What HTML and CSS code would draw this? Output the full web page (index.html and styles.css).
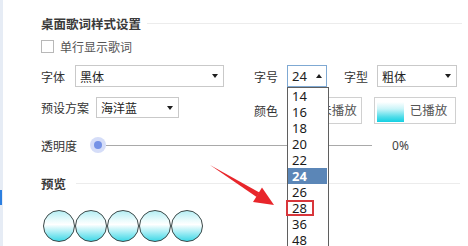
FILE: index.html
```html
<!DOCTYPE html>
<html lang="zh-CN">
<head>
    <meta charset="UTF-8">
    <title>桌面歌词样式设置</title>
    <link rel="stylesheet" href="styles.css">
</head>
<body>
    <div class="window">
        <div class="side"><span class="side-mark"></span></div>

        <div class="panel">
            <div class="section-title">
                <span>桌面歌词样式设置</span>
                <i class="rule"></i>
            </div>

            <label class="check-row">
                <span class="checkbox"></span>
                <span>单行显示歌词</span>
            </label>

            <div class="row row-font">
                <div class="group-left">
                    <span class="lbl">字体</span>
                    <div class="select sel-font"><span>黑体</span><b class="caret"></b></div>
                </div>
                <div class="group-right">
                    <span class="lbl">字号</span>
                    <div class="select sel-size is-open">
                        <span>24</span><b class="caret caret-up"></b>
                        <ul class="size-list">
                            <li>14</li>
                            <li>16</li>
                            <li>18</li>
                            <li>20</li>
                            <li>22</li>
                            <li class="is-active">24</li>
                            <li>26</li>
                            <li>28</li>
                            <li>36</li>
                            <li>48</li>
                            <span class="mark-box"></span>
                        </ul>
                    </div>
                    <span class="lbl lbl-style">字型</span>
                    <div class="select sel-style"><span>粗体</span><b class="caret"></b></div>
                </div>
            </div>

            <div class="row row-scheme">
                <div class="group-left">
                    <span class="lbl">预设方案</span>
                    <div class="select sel-scheme"><span>海洋蓝</span><b class="caret"></b></div>
                </div>
                <div class="group-right">
                    <span class="lbl">颜色</span>
                    <div class="color-btn btn-idle"><span class="swatch swatch-idle"></span><span class="btn-text">未播放</span></div>
                    <div class="color-btn btn-played"><span class="swatch swatch-played"></span><span class="btn-text">已播放</span></div>
                </div>
            </div>

            <div class="row row-opacity">
                <span class="lbl">透明度</span>
                <div class="slider">
                    <span class="knob"></span>
                    <span class="track"></span>
                </div>
                <span class="percent">0%</span>
            </div>

            <div class="section-title preview-title">
                <span>预览</span>
                <i class="rule"></i>
            </div>

            <div class="preview">
                <span class="ball"></span>
                <span class="ball"></span>
                <span class="ball"></span>
                <span class="ball"></span>
                <span class="ball"></span>
            </div>
        </div>

        <svg class="annot-arrow" width="468" height="246" viewBox="0 0 468 246">
            <polygon points="210,165 256.6,197 259.4,192.4" fill="#e8262b"/>
            <polygon points="253,202 262,187.5 274,205" fill="#e8262b"/>
        </svg>
    </div>
</body>
</html>
```

FILE: styles.css
```css
/* 桌面歌词设置面板 */
body {
    margin: 0;
    background: #fff;
    font-family: "Noto Sans CJK SC", "Microsoft YaHei", sans-serif;
    font-size: 12px;
    color: #333;
}

.window {
    position: relative;
    width: 468px;
    height: 246px;
    display: flex;
    overflow: hidden;
}

.side {
    width: 3px;
    background: #e6ecf5;
    display: flex;
    flex-direction: column;
    padding-top: 190px;
}

.side-mark {
    width: 2px;
    height: 15px;
    background: #2c7fe0;
}

.panel {
    flex: 1;
    padding: 15px 0 0 38px;
}

.section-title {
    display: flex;
    align-items: center;
    height: 16px;
    font-size: 12.5px;
    font-weight: bold;
    color: #3a3a3a;
}

.section-title .rule {
    flex: 1;
    height: 1px;
    background: #ececec;
    margin: 0 6px 0 6px;
}

.check-row {
    display: flex;
    align-items: center;
    gap: 6px;
    margin-top: 9px;
    height: 13px;
    color: #555;
}

.checkbox {
    width: 11px;
    height: 11px;
    border: 1px solid #b8b8b8;
    background: #fff;
}

.row {
    display: flex;
    align-items: center;
}

.row-font {
    margin-top: 12px;
    height: 22px;
}

.row-scheme {
    margin-top: 10px;
    height: 27px;
    align-items: flex-start;
}

.group-left {
    width: 213px;
    display: flex;
    align-items: center;
}

.group-right {
    display: flex;
    align-items: center;
}

.row-scheme .group-left {
    height: 21px;
}

.row-scheme .group-right {
    height: 27px;
}

.lbl {
    white-space: nowrap;
}

.select {
    position: relative;
    box-sizing: border-box;
    height: 22px;
    border: 1px solid #c9c9c9;
    background: #fff;
    display: flex;
    align-items: center;
    padding-left: 4px;
    color: #222;
}

.caret {
    position: absolute;
    right: 5px;
    top: 8px;
    width: 0;
    height: 0;
    border-left: 3.5px solid transparent;
    border-right: 3.5px solid transparent;
    border-top: 4px solid #1e1e1e;
}

.caret-up {
    border-top: 0;
    border-bottom: 4px solid #1e1e1e;
}

.sel-font {
    width: 149px;
    margin-left: 10px;
}

.sel-scheme {
    width: 83px;
    height: 21px;
    margin-left: 7px;
}

.sel-size {
    width: 40px;
    margin-left: 9px;
    border-color: #7fa9d3;
    font-family: "Noto Sans", sans-serif;
    font-size: 13px;
}

.sel-size .caret {
    right: 4px;
}

.lbl-style {
    margin-left: 17px;
}

.sel-style {
    width: 80px;
    margin-left: 9px;
}

.size-list {
    position: absolute;
    left: -1px;
    top: 21px;
    width: 40px;
    height: 170px;
    margin: 0;
    padding: 0;
    list-style: none;
    background: #fff;
    border: 1px solid #5f5f5f;
    z-index: 10;
    font-family: "Noto Sans", sans-serif;
    font-size: 13px;
    color: #1a1a1a;
}

.size-list li {
    height: 16px;
    line-height: 16px;
    padding-left: 4px;
}

.size-list li.is-active {
    background: #5b86b7;
    color: #fff;
    font-weight: bold;
    margin-right: 1px;
}

.mark-box {
    position: absolute;
    left: -2px;
    top: 112px;
    width: 24px;
    height: 12px;
    border: 2px solid #d8363b;
}

.color-btn {
    box-sizing: border-box;
    height: 27px;
    border: 1px solid #d0d0d0;
    background: #fff;
    display: flex;
    align-items: flex-end;
    padding: 0 2px 1px 2px;
    color: #555;
}

.btn-idle {
    width: 75px;
    margin-left: 9px;
}

.btn-played {
    width: 82px;
    margin-left: 12px;
}

.swatch {
    width: 27px;
    height: 20px;
    flex: none;
}

.swatch-idle {
    background: #fff;
}

.swatch-played {
    background: linear-gradient(to bottom, #ffffff 0%, #c9f4f8 35%, #4fdce9 75%, #14d0e2 100%);
}

.btn-text {
    flex: 1;
    text-align: center;
    height: 24px;
    line-height: 24px;
    font-size: 12.5px;
}

.row-opacity {
    margin-top: 13px;
    height: 16px;
}

.slider {
    position: relative;
    display: flex;
    align-items: center;
    width: 282px;
    height: 16px;
    margin-left: 13px;
}

.knob {
    position: relative;
    width: 16px;
    height: 16px;
    border-radius: 50%;
    background: #d5ddf8;
    flex: none;
}

.knob::after {
    content: "";
    position: absolute;
    left: 4px;
    top: 4px;
    width: 8px;
    height: 8px;
    border-radius: 50%;
    background: #7592e6;
}

.track {
    flex: 1;
    height: 1px;
    background: #a9a9a9;
}

.percent {
    margin-left: 20px;
    color: #444;
    font-family: "Noto Sans", sans-serif;
    font-size: 12px;
}

.preview-title {
    margin-top: 22px;
}

.preview-title .rule {
    margin-left: 10px;
    margin-right: 8px;
}

.preview {
    display: flex;
    margin-top: 19px;
    padding-left: 2px;
}

.ball {
    box-sizing: border-box;
    width: 32px;
    height: 32px;
    border-radius: 50%;
    border: 1.5px solid #3b4848;
    background: linear-gradient(to bottom, #b6eef4 0%, #e9fbfc 30%, #ffffff 45%, #a8eef5 70%, #3fd8e7 100%);
}

.annot-arrow {
    position: absolute;
    left: 0;
    top: 0;
    pointer-events: none;
}
```
